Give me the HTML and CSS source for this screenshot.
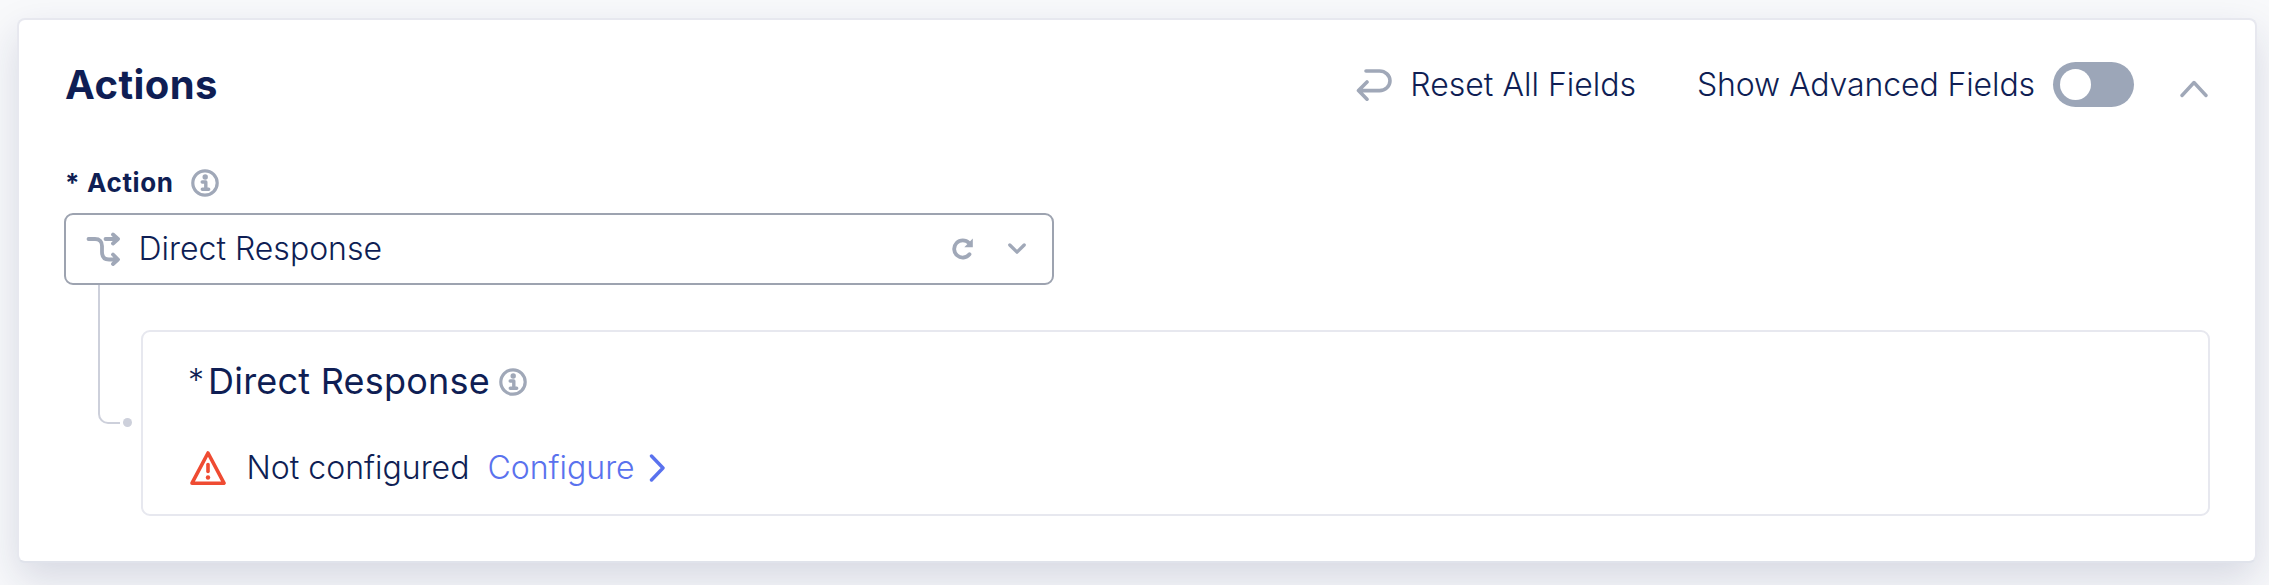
FILE: index.html
```html
<!DOCTYPE html>
<html lang="en">
<head>
<meta charset="utf-8">
<title>Actions</title>
<link rel="stylesheet" href="styles.css">
</head>
<body>
<main class="page">
  <section class="card">
    <header class="card-header">
      <h1 class="title">Actions</h1>
      <div class="reset">
        <svg class="icon" width="36" height="34" viewBox="0 0 36 34"><path d="M10 3H23.500A10.500 9.800 0 0 1 23.500 22.600H2.500M11 14L2.500 22.600L11 31.200" stroke-width="3.600"/></svg>
        <span class="text reset-text">Reset All Fields</span>
      </div>
      <div class="advanced">
        <span class="text advanced-text">Show Advanced Fields</span>
        <span class="toggle"><span class="knob"></span></span>
      </div>
      <svg class="icon collapse" width="28" height="18" viewBox="0 0 28 18"><path d="M2 15.500L14 2.500L26 15.500" stroke-width="3.400"/></svg>
    </header>

    <div class="label">
      <span class="label-text">* Action</span>
      <svg class="icon" width="28" height="28" viewBox="0 0 28 28"><circle cx="14" cy="14" r="12.200" stroke-width="3.200"/><circle class="solid" cx="14.200" cy="8" r="2.700"/><path d="M11.200 13H14.800V20M11.300 20.300H17.700" stroke-width="3.400"/></svg>
    </div>

    <div class="select">
      <svg class="icon" width="34" height="34" viewBox="0 0 34 34"><path d="M2.500 7H9Q16 7 16 14V20Q16 27.500 23 27.500H31M27 22.500L32 27.500L27 32M19.500 7H31M27 2.500L32 7L27 11.500" stroke-width="3.800"/></svg>
      <span class="text select-text">Direct Response</span>
      <svg class="icon reload" width="22" height="22" viewBox="0 0 22 22"><path d="M17.500 16.300A8.600 8.600 0 1 1 17 5" stroke-width="3.800"/><path class="solid" d="M20.800 0.500V9.200H12.300Z"/></svg>
      <svg class="icon" width="18" height="12" viewBox="0 0 18 12"><path d="M1.800 2L9 9.200L16.200 2" stroke-width="3.300"/></svg>
    </div>

    <div class="nested">
      <div class="branch"><span class="elbow"></span><span class="dot"></span></div>
      <div class="panel">
        <div class="panel-title">
          <span class="star">*</span>
          <h2 class="subtitle">Direct Response</h2>
          <svg class="icon info" width="28" height="28" viewBox="0 0 28 28"><circle cx="14" cy="14" r="12.200" stroke-width="3.200"/><circle class="solid" cx="14.200" cy="8" r="2.700"/><path d="M11.200 13H14.800V20M11.300 20.300H17.700" stroke-width="3.400"/></svg>
        </div>
        <div class="status">
          <svg class="icon warning" width="36" height="34" viewBox="0 0 36 34"><path d="M18 2L34 32.200H2Z" stroke-width="3.600"/><path d="M18 13.500V20.500" stroke-width="3.600"/><circle class="dot-mark" cx="18" cy="26.500" r="2.200"/></svg>
          <span class="text status-text">Not configured</span>
          <a class="text link">Configure</a>
          <svg class="icon next" width="16" height="28" viewBox="0 0 16 28"><path d="M2.500 2L14 14L2.500 26" stroke-width="3.400"/></svg>
        </div>
      </div>
    </div>
  </section>
</main>
</body>
</html>
```
FILE: styles.css
```css
* { box-sizing: border-box; }
body {
  margin: 0;
  height: 585px;
  overflow: hidden;
  background: #fff;
  color: #0f1e54;
  font-family: Inter, "Liberation Sans", sans-serif;
}
.page {
  width: 2269px;
  height: 585px;
  padding: 18px 0 0 17px;
  overflow: hidden;
  background: #f8f9fb;
}
.card {
  width: 2240px;
  height: 545px;
  padding: 0 45px;
  border: 2px solid #e7e8ef;
  border-bottom-color: #e0e3eb;
  border-radius: 8px;
  background: #fff;
  box-shadow: 0 16px 40px rgba(25, 35, 90, 0.15);
}
.icon {
  display: block;
  flex: none;
  fill: none;
  stroke: #a0a8b8;
  stroke-linecap: round;
  stroke-linejoin: round;
}
.solid { fill: #a0a8b8; stroke: none; }
.card-header {
  display: flex;
  align-items: center;
  height: 129px;
}
.title {
  margin: 0 auto 0 1px;
  font-size: 40px;
  font-weight: 700;
  line-height: 48px;
  letter-spacing: 0.45px;
}
.text {
  font-size: 32px;
  font-weight: 320;
  line-height: 40px;
  white-space: nowrap;
}
.reset { display: flex; align-items: center; gap: 18px; }
.advanced { display: flex; align-items: center; gap: 18px; margin-left: 61px; }
.advanced-text { letter-spacing: -0.1px; }
.toggle {
  display: flex;
  align-items: center;
  width: 81px;
  height: 45px;
  padding-left: 7px;
  border-radius: 23px;
  background: #9ca6b8;
}
.knob {
  width: 31px;
  height: 31px;
  border-radius: 50%;
  background: #fff;
}
.collapse { margin: 9px 2px 0 46px; }
.label {
  display: flex;
  align-items: center;
  gap: 17px;
  height: 32px;
  margin: 18px 0 14px 1px;
}
.label-text { font-size: 26px; font-weight: 700; line-height: 32px; letter-spacing: 0.65px; white-space: nowrap; }
.select {
  display: flex;
  align-items: center;
  width: 990px;
  height: 72px;
  padding: 0 26px 0 20px;
  border: 2px solid #9da3b0;
  border-radius: 9px;
}
.select-text { margin-left: 18.5px; }
.reload { margin: 0 34px 0 auto; }
.nested { display: flex; }
.branch { display: flex; flex: none; width: 77px; height: 139px; padding-left: 34px; }
.elbow {
  width: 22px;
  height: 139px;
  border: solid #cdd0db;
  border-width: 0 0 2px 2px;
  border-bottom-left-radius: 10px;
}
.dot {
  align-self: flex-end;
  width: 9px;
  height: 9px;
  margin: 0 0 -3px 3px;
  border-radius: 50%;
  background: #cdd0db;
}
.panel {
  flex: 1;
  height: 186px;
  margin-top: 45px;
  padding: 27px 46px 0 45px;
  border: 2px solid #e7e8ef;
  border-radius: 9px;
}
.panel-title { display: flex; align-items: center; height: 44px; }
.star { width: 20px; font-size: 32px; font-weight: 300; line-height: 44px; }
.subtitle { margin: 0 9px 0 0; font-size: 36px; font-weight: 420; line-height: 44px; letter-spacing: 0.22px; white-space: nowrap; }
.info { margin-top: 2px; }
.status { display: flex; align-items: center; height: 40px; margin: 45px 0 0 2px; }
.warning { stroke: #ef4b32; }
.dot-mark { fill: #ef4b32; stroke: none; }
.status-text { margin-left: 20.5px; }
.link { margin-left: 18px; color: #5a72ee; }
.next { margin-left: 14px; stroke: #5a72ee; }
```
